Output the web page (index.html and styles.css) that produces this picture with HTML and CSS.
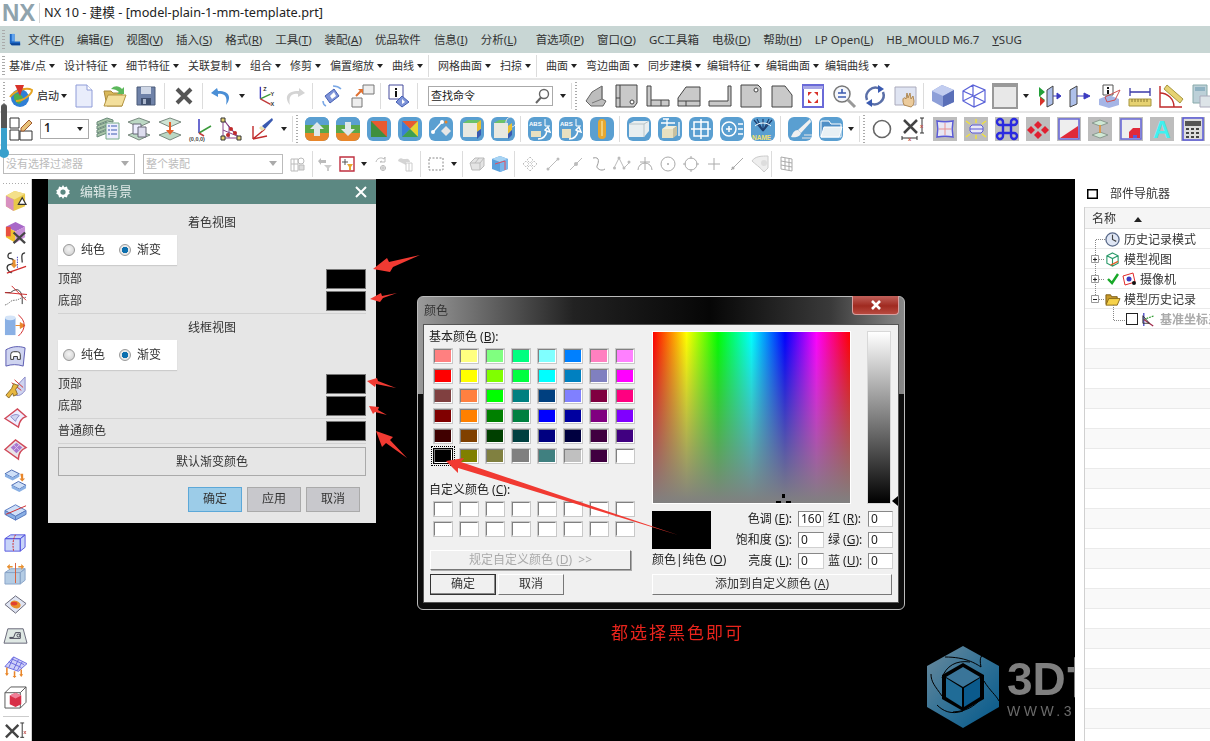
FILE: index.html
```html
<!DOCTYPE html>
<html lang="zh">
<head>
<meta charset="utf-8">
<title>NX 10 - 建模</title>
<link rel="stylesheet" href="styles.css">
</head>
<body>
<div class="app">
  <header class="titlebar">
    <span class="nxlogo">NX</span>
    <span class="titlediv"></span>
    <span class="titletext">NX 10 - 建模 - [model-plain-1-mm-template.prt]</span>
  </header>

  <nav class="menubar">
    <i class="grip"></i>
    <svg class="menuicon" viewBox="0 0 16 16"><path d="M3 2h5v8h6v4H5l-2-2z" fill="#1c66c4"/><path d="M5 2h3v8h-3z" fill="#5ea2ee"/><path d="M3 12l2 2h9v-2z" fill="#0d4596"/></svg>
    <span class="m">文件(<u>F</u>)</span><span class="m">编辑(<u>E</u>)</span><span class="m">视图(<u>V</u>)</span><span class="m">插入(<u>S</u>)</span><span class="m">格式(<u>R</u>)</span><span class="m">工具(<u>T</u>)</span><span class="m">装配(<u>A</u>)</span><span class="m">优品软件</span><span class="m">信息(<u>I</u>)</span><span class="m m-wide">分析(<u>L</u>)</span><span class="m">首选项(<u>P</u>)</span><span class="m">窗口(<u>O</u>)</span><span class="m">GC工具箱</span><span class="m">电极(<u>D</u>)</span><span class="m">帮助(<u>H</u>)</span><span class="m">LP Open(<u>L</u>)</span><span class="m">HB_MOULD M6.7</span><span class="m"><u>Y</u>SUG</span>
  </nav>

  <div class="tb tb-text">
    <i class="grip"></i>
    <span class="ti">基准/点</span><span class="ti">设计特征</span><span class="ti">细节特征</span><span class="ti">关联复制</span><span class="ti">组合</span><span class="ti">修剪</span><span class="ti">偏置缩放</span><span class="ti">曲线</span>
    <i class="sep sep-t"></i>
    <span class="ti">网格曲面</span><span class="ti">扫掠</span>
    <i class="sep sep-t"></i>
    <span class="ti">曲面</span><span class="ti">弯边曲面</span><span class="ti ti-tight">同步建模</span><span class="ti ti-tight">编辑特征</span><span class="ti ti-tight">编辑曲面</span><span class="ti ti-tight">编辑曲线</span><i class="caret"></i>
  </div>

  <div class="tb">
    <i class="grip g8"></i>
    <span class="c c26"><svg class="s24" viewBox="0 0 24 24"><circle cx="11" cy="14" r="9" fill="#2f7fd6"/><path d="M5 11c3-3 6-1 8 1s0 6-3 8c-3-1-6-5-5-9z" fill="#4fae4a"/><path d="M1 13C6 6 18 3 23 6c0 4-8 11-16 11" fill="none" stroke="#e6a421" stroke-width="2"/><path d="M6 1h9l-4 11z" fill="#d8322a"/></svg></span>
    <span class="tlabel">启动</span><span class="c c9"><i class="caret"></i></span>
    <span class="c c31"><svg class="s24" viewBox="0 0 24 24"><path d="M4 1h11l5 5v17H4z" fill="#e9edfb" stroke="#8f9cd8"/><path d="M15 1v5h5" fill="#fff" stroke="#8f9cd8"/></svg></span>
    <span class="c c31"><svg class="s24" viewBox="0 0 24 24"><path d="M1 7h7l2 2h9v13H4z" fill="#d9b85a" stroke="#a8883a"/><path d="M1 22l4-11h18l-4 11z" fill="#f3df9c" stroke="#b39442"/><path d="M8 5c4-4 8-3 11 0l2-2v7h-7l2-2c-2-2-5-3-8-3z" fill="#5cb85c"/></svg></span>
    <span class="c c31"><svg class="s24" viewBox="0 0 24 24"><path d="M3 3h18v18H3z" fill="#6f82a8" stroke="#4b5a78"/><path d="M7 3h10v7H7z" fill="#cfd7e6"/><path d="M7 14h10v7H7z" fill="#3f4f6e"/><path d="M9 15h3v5H9z" fill="#aab6cc"/></svg></span>
    <i class="sep s3"></i>
    <span class="c c31"><svg class="s24" viewBox="0 0 24 24"><path d="M5 5l14 14M19 5L5 19" stroke="#555" stroke-width="4"/></svg></span>
    <i class="sep s3"></i>
    <span class="c c29"><svg class="s24" viewBox="0 0 24 24"><path d="M8 4L2 9l7 4V10c6-1 10 2 8 11 5-6 5-14-8-14z" fill="#4b8fd6"/></svg></span><span class="c c14"><i class="caret"></i></span>
    <span class="c c31"><svg class="s24" viewBox="0 0 26 24"><path d="M8 15V2" stroke="#3a3ac0" stroke-width="1.5"/><path d="M8 15l11-5" stroke="#3a9a3a" stroke-width="1.5"/><path d="M8 15l11 6" stroke="#c03a3a" stroke-width="1.5"/><text x="11" y="7" class="axl">Z</text><text x="19" y="12" class="axl">Y</text><text x="19" y="23" class="axl">X</text></svg></span>
    <span class="c c29"><svg class="s24" viewBox="0 0 24 24"><path d="M16 4l6 5-7 4V10c-6-1-10 2-8 11-5-6-5-14 9-14z" fill="#d4d4d4"/></svg></span>
    <i class="sep s3"></i>
    <span class="c c31"><svg class="s24" viewBox="0 0 24 24"><path d="M5 12l9-7 5 7-9 7z" fill="#7d93d8" stroke="#4660b4"/><path d="M10 12l4-4 2 4-4 3z" fill="#fff"/><path d="M13 2c3 0 6 1 8 3M3 17c0 2 1 4 3 5" fill="none" stroke="#7aa8e6" stroke-width="1.5"/></svg></span>
    <span class="c c31"><svg class="s24" viewBox="0 0 24 24"><path d="M12 1h11v9H12zM1 14h10v9H1z" fill="#eee" stroke="#777"/><path d="M5 12l5-5" stroke="#e07030" stroke-width="2"/><path d="M7 5h5v5z" fill="#e07030"/></svg></span>
    <i class="sep s2"></i>
    <span class="c c31"><svg class="s24" viewBox="0 0 24 24"><path d="M2 1h14v14H2z" fill="#fff" stroke="#444a9c"/><path d="M8 4h2v2H8zM8 7h2v6H8z" fill="#111"/><path d="M15 12l7 6-7 5-6-5z" fill="#7d93d8" stroke="#4660b4"/><path d="M15 15l3 3-3 2z" fill="#fff"/></svg></span>
    <i class="sep s3"></i>
    <span class="search"><span class="searchtext">查找命令</span><svg class="s16" viewBox="0 0 16 16"><circle cx="10" cy="6" r="4.5" fill="#fff" stroke="#666" stroke-width="1.4"/><path d="M7 9.5L2 15" stroke="#666" stroke-width="2"/></svg></span>
    <span class="c c14 caretcell"><i class="caret"></i></span>
    <i class="sep s1"></i>
    <i class="grip g8"></i>
    <span class="c c31"><svg class="s24" viewBox="0 0 24 24"><path d="M2 17L8 8l10-6v13l4 2-3 5H7z" fill="#bdbdbd" stroke="#666"/><path d="M18 2v13L8 19" fill="none" stroke="#777"/></svg></span>
    <span class="c c31"><svg class="s24" viewBox="0 0 24 24"><path d="M1 1h21v18l-3 4H1z" fill="#c9c9c9" stroke="#444"/><path d="M5 1v22M1 14h4" stroke="#444"/><circle cx="17" cy="18" r="2" fill="#fff" stroke="#444"/></svg></span>
    <span class="c c31"><svg class="s24" viewBox="0 0 24 24"><path d="M1 2h4v14h18v6H1z" fill="#c9c9c9" stroke="#444"/><path d="M5 16v6M15 16v6" stroke="#444"/></svg></span>
    <span class="c c31"><svg class="s24" viewBox="0 0 24 24"><path d="M1 14l8-11h14v19H1z" fill="#c9c9c9" stroke="#444"/><path d="M1 17h22M9 17v5" stroke="#444"/></svg></span>
    <span class="c c31"><svg class="s24" viewBox="0 0 24 24"><path d="M20 2h3v20H1v-5h19z" fill="#c9c9c9" stroke="#444"/></svg></span>
    <span class="c c31"><svg class="s24" viewBox="0 0 24 24"><path d="M2 1h17l3 3v19H2z" fill="#c9c9c9" stroke="#444"/><circle cx="17" cy="6" r="2" fill="#fff" stroke="#444"/></svg></span>
    <span class="c c31"><svg class="s24" viewBox="0 0 24 24"><path d="M2 2h13l7 9v12H2z" fill="#c9c9c9" stroke="#444"/></svg></span>
    <span class="c c31"><svg class="s24" viewBox="0 0 24 24"><path d="M2 1h20v22H2z" fill="#fff" stroke="#6a6ad8" stroke-width="2"/><path d="M2 2h20v3H2z" fill="#a8a8e6"/><path d="M7 8h4L7 12zM17 19h-4l4-4zM17 8v4l-4-4zM7 19v-4l4 4z" fill="#d8322a"/></svg></span>
    <span class="c c31"><svg class="s24" viewBox="0 0 24 24"><circle cx="10" cy="10" r="8" fill="#f4f6fb" stroke="#777" stroke-width="1.5"/><path d="M6 9h8M10 5v4M6 13h8" stroke="#3a5ab0" stroke-width="1.6"/><path d="M16 16l7 7" stroke="#999" stroke-width="3"/></svg></span>
    <span class="c c31"><svg class="s24" viewBox="0 0 24 24"><path d="M4 16A9 9 0 0 1 17 5" fill="none" stroke="#5a6fa8" stroke-width="2.5"/><path d="M20 8A9 9 0 0 1 7 19" fill="none" stroke="#5a6fa8" stroke-width="2.5"/><path d="M15 1l6 4-6 4zM9 15l-6 4 6 4z" fill="#3a5ab0"/></svg></span>
    <span class="c c31"><svg class="s24" viewBox="0 0 24 24"><path d="M1 3h21v18H1z" fill="#dfe4f2" stroke="#aab"/><path d="M10 21c-2-5-1-8 1-7l1 1 1-6 1 5 2-5 1 6 2-3 1 5c0 3-1 5-3 6z" fill="#eccb9c" stroke="#b08a56"/></svg></span>
    <i class="sep s2m3"></i>
    <span class="c c31"><svg class="s24" viewBox="0 0 24 24"><path d="M1 7l10-6 12 5v12l-11 5-11-6z" fill="#8d9fd8"/><path d="M1 7l11 5 11-6-12-5z" fill="#c2cdf0"/><path d="M12 12v11l11-5V6z" fill="#5a6fb8"/></svg></span>
    <span class="c c31"><svg class="s24" viewBox="0 0 24 24"><path d="M1 7l10-6 12 5v12l-11 5-11-6zM1 7l11 5 11-6M12 12v11M11 1v11l-10 5M11 12l12 6" fill="none" stroke="#5a62d8" stroke-width="1.2"/></svg></span>
    <span class="c c31"><svg class="s24" viewBox="0 0 24 24"><path d="M0 0h24v24H0z" fill="#e8e8e8" stroke="#999" stroke-width="2"/><path d="M0 0h24v3H0z" fill="#999"/></svg></span>
    <span class="c c12"><i class="caret"></i></span>
    <span class="c c31 ml2"><svg class="s24" viewBox="0 0 24 24"><path d="M9 6l6-4v18l-6 3z" fill="#aec0ea" stroke="#444"/><path d="M1 3l6 5-6 5zM2 12l5 4-5 5z" fill="#23a03a"/><path d="M2 13l5 4-5 5z" fill="#d8322a"/><path d="M15 12h6M23 12l-4-3v6z" fill="#3a3ac0" stroke="#3a3ac0"/></svg></span>
    <span class="c c28"><svg class="s24" viewBox="0 0 24 24"><path d="M3 6l7-4v18l-7 3z" fill="#aec0ea" stroke="#444"/><path d="M10 12h8M23 12l-6-3v6z" fill="#3a3ac0" stroke="#3a3ac0"/></svg></span>
    <span class="c c31"><svg class="s24" viewBox="0 0 24 24"><path d="M2 15l10-4 10 4v6l-10 3-10-3z" fill="#a5b5e6"/><path d="M6 1h10v10H6z" fill="#fff" stroke="#555"/><path d="M10 3h2v2h-2zM10 6h2v4h-2z" fill="#111"/><path d="M8 13l15-7-5 10-8 2z" fill="none" stroke="#d05050"/></svg></span>
    <span class="c c31"><svg class="s24" viewBox="0 0 24 24"><path d="M2 8h20M2 4v8M22 4v8" stroke="#3a3aa8" stroke-width="1.3"/><path d="M1 15h22v7H1z" fill="#e6d272" stroke="#a6963e"/><path d="M4 15v3M7 15v3M10 15v3M13 15v3M16 15v3M19 15v3" stroke="#8a7a30"/></svg></span>
    <span class="c c31"><svg class="s24" viewBox="0 0 24 24"><path d="M1 2v21h22" fill="none" stroke="#c02a2a" stroke-width="1.4"/><path d="M1 9a14 14 0 0 1 14 14" fill="none" stroke="#c02a2a" stroke-width="1.4"/><path d="M8 1l16 14-3 4L5 5z" fill="#e6d272" stroke="#a6963e"/></svg></span>
    <span class="c c31"><svg class="s24" viewBox="0 0 24 24"><path d="M3 1h14v18H3z" fill="#bcd0d8" stroke="#8aa"/><path d="M5 3h10v4H5z" fill="#8fb2c2"/><path d="M10 12h14v11H10z" fill="#dde4e8" stroke="#aab"/></svg></span>
  </div>

  <div class="tb">
    <i class="slotg"></i>
    <span class="c c26"><svg class="s24" viewBox="0 0 24 24"><path d="M1 1h9v10H1zM1 13h9v10H1zM11 14h12v9H11z" fill="#fff" stroke="#333"/><path d="M12 11l8-8 3 3-8 8h-3z" fill="#e8c27a" stroke="#a05a30"/></svg></span>
    <span class="layersel"><b>1</b><i class="caret"></i></span>
    <span class="c c31"><svg class="s24" viewBox="0 0 24 24"><path d="M1 5l10-4 6 2v2l-6-1-10 4zM1 9l10-4v3L1 12zM1 13l10-4v3L1 16zM1 17l10-4v3L1 20z" fill="#a8c4a8" stroke="#6a8a7a"/><path d="M10 6h13v16H10z" fill="#eef" stroke="#7a8"/><path d="M12 9h2M12 13h2M12 17h2M15 9h6M15 13h6M15 17h6" stroke="#3a5ab0"/></svg></span>
    <span class="c c31"><svg class="s24" viewBox="0 0 24 24"><path d="M1 5l11-4 11 4-11 5z" fill="#bcd8c4" stroke="#7a8a80"/><path d="M1 18l11-4 11 4-11 5z" fill="#bcd8c4" stroke="#7a8a80"/><path d="M6 7h8v10H6z" fill="#eef" stroke="#667"/><path d="M11 10h8v10h-8z" fill="#dde" stroke="#667"/></svg></span>
    <span class="c c31"><svg class="s24" viewBox="0 0 24 24"><path d="M1 5l11-4 11 4-11 5z" fill="#cfe4d4" stroke="#7a8a80"/><path d="M1 18l11-4 11 4-11 5z" fill="#bcd8c4" stroke="#7a8a80"/><path d="M11 5h2v8h3l-4 5-4-5h3z" fill="#e8602a"/></svg></span>
    <span class="c c31"><svg class="s24" viewBox="0 0 24 24"><path d="M10 16V2" stroke="#3a3ac0" stroke-width="1.5"/><path d="M10 16l12-7" stroke="#3a9a3a" stroke-width="1.5"/><path d="M10 16l5 3" stroke="#c03a3a" stroke-width="1.5"/><text x="0" y="24" class="xyz">(0,0,0)</text></svg></span>
    <span class="c c29"><svg class="s24" viewBox="0 0 24 24"><path d="M4 2l6 8 10 11H4zM10 10v11M4 13l14 6M4 2l16 19" fill="none" stroke="#884488" stroke-width="1"/><circle cx="12" cy="12" r="2" fill="#c02a2a"/><circle cx="16" cy="16" r="2" fill="#c02a2a"/><circle cx="9" cy="18" r="2" fill="#c02a2a"/><path d="M2 1h4v4H2zM18 19h4v4h-4zM2 19h4v4H2z" fill="#e6d272" stroke="#333"/></svg></span>
    <span class="c c33"><svg class="s24" viewBox="0 0 24 24"><path d="M3 22V9M3 22l14-3M3 22l12-10" stroke="#c02a2a" stroke-width="1.4"/><path d="M12 9L22 1l1 2-8 9z" fill="#3a5ab0"/><path d="M11 9l4 3-3 2-3-3z" fill="#e8e0b0"/></svg></span>
    <span class="c c12"><i class="caret"></i></span>
    <i class="sep s2m0"></i>
    <i class="grip g8"></i>
    <span class="c c31"><span class="bb bb-updown"><svg class="s24" viewBox="0 0 24 24"><path d="M0 16h24v8H0z" fill="#e8862a"/><path d="M0 8h24v8H0z" fill="#5aa84a"/><path d="M0 0h24v8H0z" fill="#5a9fd1"/><path d="M12 5l7 7h-4v7H9v-7H5z" fill="#dfe8ea"/></svg></span></span>
    <span class="c c31"><span class="bb"><svg class="s24" viewBox="0 0 24 24"><path d="M0 16h24v8H0z" fill="#e8862a"/><path d="M0 8h24v8H0z" fill="#5aa84a"/><path d="M0 0h24v8H0z" fill="#5a9fd1"/><path d="M12 19l7-7h-4V5H9v7H5z" fill="#dfe8ea"/></svg></span></span>
    <span class="c c31"><span class="bb"><svg class="s24" viewBox="0 0 24 24"><path d="M4 4h16v16H4z" fill="#3f8f3f"/><path d="M4 4h16L4 20z" fill="#3f8f3f"/><path d="M4 4h16v16z" fill="#e85a30"/></svg></span></span>
    <span class="c c31"><span class="bb"><svg class="s24" viewBox="0 0 24 24"><path d="M4 4h16L12 12z" fill="#e85a30"/><path d="M4 4v16l8-8z" fill="#3a7fd8"/><path d="M20 4v16l-8-8z" fill="#e8d430"/><path d="M4 20h16l-8-8z" fill="#3fa04f"/></svg></span></span>
    <span class="c c31"><span class="bb"><svg class="s24" viewBox="0 0 24 24"><path d="M4 15l8-9" stroke="#fff" stroke-width="1.5"/><circle cx="4" cy="15" r="2" fill="#fff"/><circle cx="13" cy="5" r="2" fill="#fff"/><path d="M12 14l5-5 5 5-5 5z" fill="#e6e6e6"/><circle cx="17" cy="5" r="1.5" fill="#e8862a"/></svg></span></span>
    <span class="c c31"><span class="bb"><svg class="s24" viewBox="0 0 24 24"><path d="M3 6h14v14H3z" fill="#e8e8e0"/><path d="M3 6l5-3h13l-4 3z" fill="#6ac26a"/><path d="M17 6l4-3v9l-4 3z" fill="#e8c030"/><path d="M17 15l4-3v6l-4 4z" fill="#3a5ab0"/></svg></span></span>
    <span class="c c31"><span class="bb"><svg class="s24" viewBox="0 0 24 24"><path d="M3 6h14v15H3z" fill="#e8e8e0"/><path d="M3 6l5-3h8l-3 3z" fill="#6ac26a"/><path d="M17 9l4-3v7l-4 4z" fill="#e8c030"/><path d="M17 17l4-4v5l-4 4z" fill="#3a5ab0"/><path d="M15 6a5 5 0 1 1 6 4" fill="none" stroke="#e6e6e6"/></svg></span></span>
    <i class="sep s2m3"></i>
    <span class="c c31"><span class="bb"><svg class="s24" viewBox="0 0 24 24"><text x="1" y="9" class="abs">ABS</text><path d="M17 2v7h5" stroke="#fff" fill="none"/><path d="M3 14h10v6H3z" fill="#e8e0c0"/><path d="M10 22c5 0 8-3 9-8l3 1-2-5-3 3 1 1" fill="none" stroke="#fff" stroke-width="1.5"/></svg></span></span>
    <span class="c c31"><span class="bb"><svg class="s24" viewBox="0 0 24 24"><text x="1" y="9" class="abs">ABS</text><path d="M17 2v7h5" stroke="#fff" fill="none"/><path d="M3 12h9v9H3z" fill="#e8e0c0"/><path d="M10 22c5 0 8-3 9-8l3 1-2-5-3 3 1 1" fill="none" stroke="#fff" stroke-width="1.5"/></svg></span></span>
    <span class="c c31"><span class="bb"><svg class="s24" viewBox="0 0 24 24"><rect x="8" y="2" width="8" height="20" rx="4" fill="#e8a830"/><path d="M12 4v15" stroke="#f6dc90" stroke-width="1.5"/></svg></span></span>
    <i class="sep s2m3"></i>
    <span class="c c31"><span class="bb"><svg class="s24" viewBox="0 0 24 24"><path d="M2 7l5-3h15v10l-5 6H2z" fill="#e8eef0"/><path d="M2 7h15v13M17 7l5-3" fill="none" stroke="#b8c4c8"/></svg></span></span>
    <span class="c c31"><span class="bb"><svg class="s24" viewBox="0 0 24 24"><path d="M4 12h11v9H4z" fill="#e8e0c0"/><path d="M4 12l4-3h11l-4 3z" fill="#f4eed8"/><path d="M15 12l4-3v9l-4 3z" fill="#c8c0a0"/><path d="M3 6h14M9 2v7M21 5v14M5 2l6 0" stroke="#fff" stroke-width="1.3"/></svg></span></span>
    <span class="c c31"><span class="bb"><svg class="s24" viewBox="0 0 24 24"><path d="M5 5h14v14H5zM12 2v20M2 12h20" fill="none" stroke="#fff" stroke-width="1.5"/></svg></span></span>
    <span class="c c31"><span class="bb"><svg class="s24" viewBox="0 0 24 24"><circle cx="9" cy="12" r="7" fill="none" stroke="#fff" stroke-width="1.5"/><path d="M6 12h6M9 9v6M18 7h5M18 12h5M18 17h5" stroke="#fff" stroke-width="1.5"/></svg></span></span>
    <span class="c c31"><span class="bb"><svg class="s24" viewBox="0 0 24 24"><path d="M12 14L3 3M12 14l9-11M12 14V2M12 14L6 2M12 14l6-12" stroke="#1f3f70" stroke-width="1.2"/><path d="M4 9c4-4 12-4 16 0" stroke="#fff" fill="none"/><text x="1" y="23" class="nm">NAME</text></svg></span></span>
    <i class="sep s2m3"></i>
    <span class="c c31"><span class="bb"><svg class="s24" viewBox="0 0 24 24"><path d="M22 2L10 13l3 3L23 5z" fill="#f0f0f0"/><path d="M10 13c-4 0-5 3-7 7 4 1 9 0 10-4z" fill="#f0f0f0"/><path d="M16 18h8M14 21h10" stroke="#e8e8e8" stroke-width="1.2"/></svg></span></span>
    <span class="c c31"><span class="bb"><svg class="s24" viewBox="0 0 24 24"><path d="M2 4h8l2 3h10v13H2z" fill="#4f8fc6" stroke="#fff"/><path d="M2 20l3-10h18l-3 10z" fill="#e8f0f4" stroke="#fff"/></svg></span></span>
    <span class="c c10"><i class="caret"></i></span>
    <i class="sep s3m0"></i>
    <i class="grip g8"></i>
    <span class="c c28"><svg class="s20" viewBox="0 0 20 20"><circle cx="10" cy="10" r="8.5" fill="none" stroke="#666" stroke-width="1.6"/></svg></span>
    <span class="c c33"><svg class="s24" viewBox="0 0 24 24"><path d="M3 3l13 13M16 3L3 16" stroke="#444" stroke-width="2.5"/><path d="M19 1h4M21 1v15M19 16h4M1 19v4M16 19v4M1 21h15" stroke="#333"/><text x="19" y="11" class="rx">x</text><text x="7" y="24" class="rx">x</text></svg></span>
    <span class="c c31"><span class="gs"><svg class="s24" viewBox="0 0 24 24"><path d="M4 4c5 1 11 1 16 0-1 5-1 11 0 16-5-1-11-1-16 0 1-5 1-11 0-16z" fill="#e8e8f4" stroke="#5a5ad8" stroke-width="1.4"/><path d="M12 6v12M6 12h12" stroke="#e89090"/></svg></span></span>
    <span class="c c31"><span class="gs"><svg class="s24" viewBox="0 0 24 24"><path d="M6 10l2-2h9l2 2v4l-2 2H8l-2-2zM6 12h13" fill="#e8e8f4" stroke="#5a5ad8"/><path d="M12 2v4M12 18v4M2 4l4 3M22 4l-4 3M2 20l4-3M22 20l-4-3" stroke="#f0e040" stroke-width="1.5"/></svg></span></span>
    <span class="c c31"><span class="gs"><svg class="s24" viewBox="0 0 24 24"><path d="M8 8h8v8H8zM8 8H5a3 3 0 1 1 3-3zM16 8V5a3 3 0 1 1 3 3zM16 16h3a3 3 0 1 1-3 3zM8 16v3a3 3 0 1 1-3-3z" fill="none" stroke="#2a2ae0" stroke-width="2.4"/></svg></span></span>
    <span class="c c31"><span class="gs"><svg class="s24" viewBox="0 0 24 24"><path d="M12 4l4 4-4 4-4-4zM5 9l4 4-4 4-4-4zM19 9l4 4-4 4-4-4zM12 14l4 4-4 4-4-4z" fill="#e02030"/></svg></span></span>
    <span class="c c31"><span class="gs"><svg class="s24" viewBox="0 0 24 24"><path d="M2 2h20v20H2z" fill="#eeeeee" stroke="#6a6ad8" stroke-width="1.6"/><path d="M3 21L21 9v12z" fill="#e02a3a"/></svg></span></span>
    <span class="c c31"><span class="gs"><svg class="s24" viewBox="0 0 24 24"><path d="M4 6l8-3 8 3-8 3zM4 18l8-3 8 3-8 3z" fill="#cfe8d4" stroke="#8a9a90"/><path d="M12 8v8" stroke="#e89030" stroke-width="1.5"/></svg></span></span>
    <span class="c c31"><span class="gs"><svg class="s24" viewBox="0 0 24 24"><path d="M2 2h20v20H2z" fill="#eeeeee" stroke="#6a6ad8" stroke-width="1.6"/><path d="M10 21v-6l4-4h7v10z" fill="#e02a3a"/><path d="M14 18h4v3h-4z" fill="#5a5ad8"/></svg></span></span>
    <span class="c c31"><span class="gs"><svg class="s24" viewBox="0 0 24 24"><text x="12" y="21" class="bigA">A</text></svg></span></span>
    <span class="c c31"><span class="gs"><svg class="s24" viewBox="0 0 24 24"><path d="M2 1h20v22H2z" fill="#ddd" stroke="#5a5ad8" stroke-width="1.5"/><path d="M4 4h16v5H4z" fill="#555"/><path d="M5 11h3v2H5zM10 11h3v2h-3zM15 11h3v2h-3zM5 15h3v2H5zM10 15h3v2h-3zM15 15h3v2h-3zM5 19h3v2H5zM10 19h3v2h-3zM15 19h3v2h-3z" fill="#444"/></svg></span></span>
  </div>

  <div class="tb tb-last">
    <span class="filter f1">没有选择过滤器<i class="caret caret-light"></i></span>
    <span class="filter f2">整个装配<i class="caret caret-light"></i></span>
    <span class="c c29"><svg class="s16" viewBox="0 0 16 16"><path d="M1 3h7v12H1zM4 3v12M1 8h7" fill="none" stroke="#bbb"/><circle cx="11" cy="5" r="3" fill="none" stroke="#bbb"/><path d="M9 9h5v5H9z" fill="#ddd" stroke="#bbb"/></svg></span>
    <i class="sep"></i>
    <span class="c c24"><svg class="s16" viewBox="0 0 16 16"><path d="M1 5l3-3v2h5v3H4v2z" fill="#bbb"/><path d="M7 9h8l-3 3v3h-2v-3z" fill="#ccc"/></svg></span>
    <span class="c c20"><svg class="s16" viewBox="0 0 16 16"><path d="M1 1h14v14H1z" fill="#fff" stroke="#c03040" stroke-width="1.4"/><path d="M6 3v6M3 6h6" stroke="#555"/><path d="M8 8h6l-2 3v3h-2v-3z" fill="#e8a830"/></svg></span>
    <span class="c c14"><i class="caret"></i></span>
    <span class="c c21"><svg class="s16" viewBox="0 0 16 16"><path d="M9 9v6M6 12h6" stroke="#bbb"/><circle cx="9" cy="12" r="2.5" fill="none" stroke="#bbb"/><path d="M2 6a5 5 0 0 1 8-3l1-2v5H6l2-1" fill="none" stroke="#bbb"/></svg></span>
    <span class="c c25"><svg class="s16" viewBox="0 0 16 16"><path d="M1 5a3 3 0 0 1 5-2h3a3 3 0 0 1 4 3H9v3" fill="#d4d4d4"/><path d="M9 7h6v8H9zM12 7v8" fill="none" stroke="#ccc"/></svg></span>
    <i class="sep s3"></i>
    <span class="c c24"><svg class="s16" viewBox="0 0 16 16"><path d="M1 2h14v12H1z" fill="none" stroke="#888" stroke-dasharray="2 1.5"/></svg></span>
    <span class="c c12"><i class="caret"></i></span>
    <i class="sep s2m0"></i>
    <span class="c c28"><svg class="s16" viewBox="0 0 16 16"><path d="M1 7l5-5h9v8l-4 4H3z" fill="#e4e4e4" stroke="#bbb"/><path d="M1 7h10v7M11 7l4-5M6 7l4-5" fill="none" stroke="#bbb"/></svg></span>
    <span class="c c18"><svg class="s18" viewBox="0 0 18 18"><path d="M1 4l8-3 8 3v10l-8 3-8-3z" fill="#5aa0dc"/><path d="M1 4l8 3 8-3-8-3z" fill="#a8d4f4"/><path d="M9 7v10l8-3V4z" fill="#7ab4ea"/><path d="M4 9l10-3v9" fill="none" stroke="#e05060"/></svg></span>
    <i class="sep s5"></i>
    <span class="c c23 ml4"><svg class="s16" viewBox="0 0 16 16"><path d="M8 1l3 3-3 3-3-3zM1 8l3-3 3 3-3 3zM15 8l-3-3-3 3 3 3zM8 15l3-3-3-3-3 3z" fill="none" stroke="#bbb" stroke-dasharray="1.5 1"/></svg></span>
    <span class="c c23"><svg class="s16" viewBox="0 0 16 16"><path d="M2 14L14 2" stroke="#bbb"/><circle cx="13" cy="3" r="1.5" fill="#bbb"/><circle cx="3" cy="13" r="1.5" fill="#bbb"/></svg></span>
    <span class="c c23"><svg class="s16" viewBox="0 0 16 16"><path d="M2 14L14 2" stroke="#bbb"/><circle cx="8" cy="8" r="2" fill="#bbb"/></svg></span>
    <span class="c c23"><svg class="s16" viewBox="0 0 16 16"><path d="M2 2c8-2 5 6 4 8s4 6 8 3" fill="none" stroke="#999"/></svg></span>
    <span class="c c23"><svg class="s18" viewBox="0 0 18 18"><path d="M1 13L6 3l5 10 6-6" fill="none" stroke="#bbb"/><circle cx="6" cy="3" r="1.5" fill="#bbb"/><circle cx="1.5" cy="13" r="1.5" fill="#bbb"/><circle cx="11" cy="13" r="1.5" fill="#bbb"/><circle cx="16" cy="7" r="1.5" fill="#bbb"/></svg></span>
    <span class="c c23"><svg class="s16" viewBox="0 0 16 16"><path d="M1 14a7 7 0 0 1 14 0M8 1v13M3 6h10" fill="none" stroke="#aaa"/></svg></span>
    <span class="c c23"><svg class="s16" viewBox="0 0 16 16"><circle cx="8" cy="8" r="7" fill="none" stroke="#aaa"/><circle cx="8" cy="8" r="1" fill="#aaa"/></svg></span>
    <span class="c c23"><svg class="s16" viewBox="0 0 16 16"><circle cx="8" cy="8" r="6" fill="none" stroke="#aaa"/><path d="M8 0v3M8 13v3M0 8h3M13 8h3" stroke="#aaa"/></svg></span>
    <span class="c c23"><svg class="s16" viewBox="0 0 16 16"><path d="M8 2v12M2 8h12" stroke="#aaa"/></svg></span>
    <span class="c c23"><svg class="s16" viewBox="0 0 16 16"><path d="M2 14L14 2" stroke="#aaa"/><circle cx="4" cy="12" r="1.5" fill="#aaa"/></svg></span>
    <span class="c c23"><svg class="s18" viewBox="0 0 18 18"><path d="M1 6c3-5 10-5 16-5v12l-4 4c-4-5-9-8-12-11z" fill="#eee" stroke="#ccc"/><circle cx="13" cy="8" r="3" fill="#ddd"/></svg></span>
    <i class="sep"></i>
    <span class="c c30"><svg class="s16" viewBox="0 0 16 16"><path d="M2 1l11 2v12L2 13zM6 2v12M10 3v12M2 5l11 2M2 9l11 2" fill="none" stroke="#aaa"/></svg></span>
  </div>

  <main class="main">
    <aside class="leftbar">
      <i class="hgrip"></i>
      <span class="lc"><svg class="s24" viewBox="0 0 24 24"><path d="M2 6l9-5 11 3v13l-12 5-8-5z" fill="#e8c84a"/><path d="M2 6l9 4 11-6-11-3z" fill="#f4e08a"/><path d="M2 6v11l8 5V10z" fill="#d890c0"/><path d="M15 15l4-7 4 7z" fill="#fff" stroke="#333" stroke-width="1.2"/></svg></span>
      <span class="lc"><svg class="s24" viewBox="0 0 24 24"><path d="M2 6l10-5 10 5-10 5z" fill="#a868c8"/><path d="M2 6v11l10 6V11z" fill="#f0c030"/><path d="M22 6v11l-10 6V11z" fill="#c890d8"/><path d="M2 6h5v10H2z" fill="#e85040"/><path d="M10 12l12 11M22 12L10 23" stroke="#444" stroke-width="2.4"/></svg></span>
      <span class="lc"><svg class="s24" viewBox="0 0 24 24"><path d="M8 1C3 1 3 7 7 7s4 6 0 6-5 4-2 7 3 1 3 1M22 1c-5 0-3 6-3 10" fill="none" stroke="#333" stroke-width="1.3"/><path d="M14 5v12" stroke="#3a3ac0" stroke-dasharray="1.5 1"/><path d="M3 22l20-7" stroke="#d02a2a" stroke-width="1.2"/><path d="M9 8h3v5h2l-3.500 4-3.500-4h2z" fill="#e89030"/></svg></span>
      <span class="lc"><svg class="s24" viewBox="0 0 24 24"><path d="M1 10h6c9-8 12 2 12 6v6" fill="none" stroke="#333"/><path d="M1 23c6-2 5-5 10-5s5-3 12-3" fill="none" stroke="#777" stroke-dasharray="1.500 1"/><path d="M1 10l23 2M8 3l15 15" stroke="#d02a2a"/></svg></span>
      <span class="lc"><svg class="s24" viewBox="0 0 24 24"><path d="M1 4h11v18H1z" fill="#8ab0e4"/><ellipse cx="6.500" cy="4" rx="5.500" ry="2.500" fill="#d4e4f8"/><path d="M12 12h6M22 12l-5-3v6z" fill="#e8862a" stroke="#e8862a"/><path d="M15 1c8 6 8 15 0 22" fill="none" stroke="#d02a2a"/></svg></span>
      <span class="lc"><svg class="s24" viewBox="0 0 24 24"><path d="M2 5c7-4 14-4 20-2l-2 19c-6-2-12-2-18 0z" fill="#cfd4f0" stroke="#5a5ab0"/><path d="M7 15v-5a3 3 0 0 1 3-3h4a3 3 0 0 1 3 3v5h-3v-3H10v3z" fill="#fff" stroke="#333"/></svg></span>
      <span class="lc"><svg class="s24" viewBox="0 0 24 24"><path d="M8 16L22 1v14c-4 6-10 8-14 1z" fill="#cfd4f0" stroke="#8a8ac8"/><path d="M8 7l10 8M11 4l9 8" stroke="#d02a2a"/><path d="M2 20l6-7 2-5 5 2-3 4 2 5-4 2-1-3-4 5z" fill="#e8b840" stroke="#8a6a2a"/></svg></span>
      <span class="lc"><svg class="s24" viewBox="0 0 24 24"><path d="M1 12L14 2l9 8c-4 1-7 5-8 11z" fill="#eef" stroke="#d04a5a" stroke-width="1.5"/><path d="M7 10c3-2 6-3 9-1-2 2-3 3-4 6z" fill="#cfd4f0" stroke="#8a8ac8"/></svg></span>
      <span class="lc"><svg class="s24" viewBox="0 0 24 24"><path d="M1 12L12 2l11 8c-5 2-8 5-8 12z" fill="#e8e4e8" stroke="#d04a5a" stroke-width="1.5"/><path d="M7 10l6-5 6 5-6 6z" fill="#a878d0"/><path d="M10 7l6 6M16 7l-6 6" stroke="#d8c0e8"/></svg></span>
      <span class="lc"><svg class="s24" viewBox="0 0 24 24"><path d="M1 5l7-4 8 4-7 4z" fill="#cfe0f8" stroke="#4a6ab0"/><path d="M1 5v3l8 4V9zM16 5v3l-7 4V9z" fill="#8ab0e4"/><path d="M8 17l7-4 8 4-7 4z" fill="#cfe0f8" stroke="#4a6ab0"/><path d="M8 17v3l8 4v-3zM23 17v3l-7 4v-3z" fill="#8ab0e4"/><path d="M17 5h3v5h2l-3 3-3-3h2z" fill="#e8862a"/></svg></span>
      <span class="lc"><svg class="s24" viewBox="0 0 24 24"><path d="M1 11l11-6 11 6-11 6z" fill="#cfe0f8" stroke="#5a7ac0"/><path d="M1 11v4l11 6v-4zM23 11v4l-11 6v-4z" fill="#8ab0e4" stroke="#5a7ac0"/><path d="M2 15L23 6" stroke="#d02a2a"/></svg></span>
      <span class="lc"><svg class="s24" viewBox="0 0 24 24"><path d="M1 8h16l5-4H7zM1 8v13h16V8zM17 8v13l5-4V4z" fill="#c8d4f8" stroke="#5a5ae0"/><path d="M12 4c-3 5-3 11-2 17" fill="none" stroke="#d02a2a" stroke-dasharray="2 1"/></svg></span>
      <span class="lc"><svg class="s24" viewBox="0 0 24 24"><path d="M1 11h16l5-4H7zM1 11v12h16V11zM17 11v12l5-4V7z" fill="#b4cce4" stroke="#8aa4c8"/><path d="M12 1v21" stroke="#d8603a"/><path d="M4 5h5M20 5h-5" stroke="#e89030" stroke-width="1.5"/><path d="M3 5l3-3v6zM21 5l-3-3v6z" fill="#e89030"/></svg></span>
      <span class="lc"><svg class="s24" viewBox="0 0 24 24"><path d="M1 12L12 3l11 8-11 10z" fill="#dfe4f2" stroke="#667"/><ellipse cx="12" cy="12" rx="5.500" ry="4" fill="#e8902a" transform="rotate(20 12 12)"/><ellipse cx="10.500" cy="11" rx="3.500" ry="2" fill="#e04030"/></svg></span>
      <span class="lc"><svg class="s24" viewBox="0 0 24 24"><path d="M4 5h16l4 15H0z" fill="#dfe8e4" stroke="#667"/><path d="M6 14h4l2-5h5v6H6z" fill="none" stroke="#445"/><circle cx="15" cy="12" r="1.500" fill="none" stroke="#445"/></svg></span>
      <span class="lc"><svg class="s24" viewBox="0 0 24 24"><path d="M1 12L10 2l14 7-9 8z" fill="#cfd0f8" stroke="#6a6ae0"/><path d="M5 7l13 6M8 4l13 6M10 2l-5 11M15 5l-5 10M19 7l-5 9" stroke="#6a6ae0" fill="none"/><path d="M3 13v7M11 17v6M18 15v6" stroke="#e8862a" stroke-width="1.6"/><path d="M1 19h4l-2 3zM9 22h4l-2 2zM16 20h4l-2 3z" fill="#e8862a"/></svg></span>
      <span class="lc"><svg class="s24" viewBox="0 0 24 24"><path d="M1 7l6-6h16v16l-6 6H1zM1 7h16v16M17 7l6-6" fill="none" stroke="#555"/><path d="M6 10l6-3 6 3v9l-6 3-6-3z" fill="#d83048"/><path d="M6 10l6 3 6-3-6-3z" fill="#f08098"/></svg></span>
      <i class="ldiv"></i>
      <span class="lc"><svg class="s24" viewBox="0 0 24 24"><path d="M2 3l13 13M15 3L2 16" stroke="#444" stroke-width="2.5"/><path d="M17 1h4M19 1v15M17 16h4" stroke="#333"/><text x="20" y="12" class="rx">x</text></svg></span>
    </aside>

    <div class="canvas"></div>

    <section class="nav">
      <div class="navhead"><i class="navbox"></i><span>部件导航器</span></div>
      <div class="tree">
        <div class="treehead"><span>名称</span><i class="uptri"></i></div>
        <div class="row r-a"><svg class="s15" viewBox="0 0 16 16"><circle cx="8" cy="8" r="7" fill="#dfe6f4" stroke="#5a6a8a" stroke-width="1.400"/><path d="M8 3v5l4 2" fill="none" stroke="#444" stroke-width="1.200"/></svg><span>历史记录模式</span></div>
        <div class="row r-a"><svg class="s15" viewBox="0 0 16 16"><path d="M8 1l6 3v8l-6 3-6-3V4zM2 4l6 3 6-3M8 7v8" fill="none" stroke="#2a9a6a" stroke-width="1.200"/><path d="M6 14l8-4" stroke="#e0602a" stroke-width="1.500"/></svg><span>模型视图</span></div>
        <div class="row r-c"><svg class="chk" viewBox="0 0 12 12"><path d="M1 6l4 4 6-9" fill="none" stroke="#18a828" stroke-width="2.400"/></svg><svg class="cam" viewBox="0 0 14 14"><path d="M1 4l10-3 2 9-10 3z" fill="#fff" stroke="#e02a2a"/><circle cx="7" cy="7" r="2.500" fill="#3a3ac0"/><circle cx="12" cy="11" r="2" fill="#111"/></svg><span>摄像机</span></div>
        <div class="row r-a"><svg class="s15" viewBox="0 0 16 16"><path d="M1 3h5l1 2h6v8H1z" fill="#c89a2a" stroke="#7a5a12"/><path d="M1 14l3-7h12l-3 7z" fill="#f6d24a" stroke="#8a6a1a"/></svg><span>模型历史记录</span></div>
        <div class="row r-e"><i class="cbx"></i><svg class="s15" viewBox="0 0 16 16"><path d="M3 15V1" stroke="#2a2ac0" stroke-width="1.200"/><path d="M3 8l11-4" stroke="#2a9a2a" stroke-dasharray="2 1" stroke-width="1.200"/><path d="M3 8l10 7" stroke="#a02a4a" stroke-width="1.400"/><path d="M2 4l7 8H2z" fill="none" stroke="#333"/></svg><span class="muted">基准坐标系</span></div>
        <div class="row"></div><div class="row alt"></div><div class="row"></div><div class="row alt"></div><div class="row"></div><div class="row alt"></div><div class="row"></div><div class="row alt"></div><div class="row"></div><div class="row alt"></div><div class="row"></div><div class="row alt"></div><div class="row"></div><div class="row alt"></div><div class="row"></div><div class="row alt"></div><div class="row"></div><div class="row alt"></div><div class="row"></div><div class="row alt"></div>
        <svg class="treelines" viewBox="1085 229 50 100"><path d="M1095.500 240v58M1096 239.500h9M1099 259.500h6M1099 279.500h6M1099 299.500h6M1113.500 305v15M1114 320.500h11" fill="none" stroke="#888" stroke-dasharray="1 1"/><path d="M1091.500 255.500h7v7h-7zM1091.500 275.500h7v7h-7zM1091.500 295.500h7v7h-7z" fill="#fff" stroke="#999"/><path d="M1093 259.500h4M1095 257.500v4M1093 279.500h4M1095 277.500v4M1093 299.500h4" stroke="#222"/></svg>
      </div>
    </section>

    <div class="dlg-bg">
      <div class="dlg-title"><svg class="s14" viewBox="0 0 16 16"><path d="M8 0l1.500 2.500 3-.8.800 3L16 6.500 14.500 8 16 9.500l-2.700 1.800-.8 3-3-.8L8 16l-1.500-2.500-3 .8-.8-3L0 9.500 1.500 8 0 6.500l2.700-1.800.8-3 3 .8z" fill="#fff"/><circle cx="8" cy="8" r="3" fill="#5c8882"/></svg><span>编辑背景</span><svg class="s14 dlg-x" viewBox="0 0 14 14"><path d="M2 2l10 10M12 2L2 12" stroke="#fff" stroke-width="2"/></svg></div>
      <div class="dlg-body">
        <div class="sect sect-first">着色视图</div>
        <div class="radios"><i class="radio"></i><span>纯色</span><i class="radio on"></i><span>渐变</span></div>
        <div class="crow crow-first"><span>顶部</span><i class="blk"></i></div>
        <div class="crow"><span>底部</span><i class="blk"></i></div>
        <hr class="hr">
        <div class="sect">线框视图</div>
        <div class="radios"><i class="radio"></i><span>纯色</span><i class="radio on"></i><span>渐变</span></div>
        <div class="crow crow-first"><span>顶部</span><i class="blk"></i></div>
        <div class="crow"><span>底部</span><i class="blk"></i></div>
        <hr class="hr">
        <div class="crow"><span>普通颜色</span><i class="blk"></i></div>
        <hr class="hr">
        <div class="defbtn">默认渐变颜色</div>
        <div class="btnrow"><span class="dbtn primary">确定</span><span class="dbtn">应用</span><span class="dbtn">取消</span></div>
      </div>
    </div>

    <div class="win">
      <div class="win-title"><span>颜色</span><span class="win-close"><svg class="s10" viewBox="0 0 12 10"><path d="M2 1l8 8M10 1L2 9" stroke="#fff" stroke-width="2.600"/></svg></span></div>
      <div class="client">
        <div class="cl-left">
          <div class="lab">基本颜色 (<u>B</u>):</div>
          <div class="swgrid">
            <i class="sw" style="background:#ff8080"></i><i class="sw" style="background:#ffff80"></i><i class="sw" style="background:#80ff80"></i><i class="sw" style="background:#00ff80"></i><i class="sw" style="background:#80ffff"></i><i class="sw" style="background:#0080ff"></i><i class="sw" style="background:#ff80c0"></i><i class="sw" style="background:#ff80ff"></i>
            <i class="sw" style="background:#ff0000"></i><i class="sw" style="background:#ffff00"></i><i class="sw" style="background:#80ff00"></i><i class="sw" style="background:#00ff40"></i><i class="sw" style="background:#00ffff"></i><i class="sw" style="background:#0080c0"></i><i class="sw" style="background:#8080c0"></i><i class="sw" style="background:#ff00ff"></i>
            <i class="sw" style="background:#804040"></i><i class="sw" style="background:#ff8040"></i><i class="sw" style="background:#00ff00"></i><i class="sw" style="background:#008080"></i><i class="sw" style="background:#004080"></i><i class="sw" style="background:#8080ff"></i><i class="sw" style="background:#800040"></i><i class="sw" style="background:#ff0080"></i>
            <i class="sw" style="background:#800000"></i><i class="sw" style="background:#ff8000"></i><i class="sw" style="background:#008000"></i><i class="sw" style="background:#008040"></i><i class="sw" style="background:#0000ff"></i><i class="sw" style="background:#0000a0"></i><i class="sw" style="background:#800080"></i><i class="sw" style="background:#8000ff"></i>
            <i class="sw" style="background:#400000"></i><i class="sw" style="background:#804000"></i><i class="sw" style="background:#004000"></i><i class="sw" style="background:#004040"></i><i class="sw" style="background:#000080"></i><i class="sw" style="background:#000040"></i><i class="sw" style="background:#400040"></i><i class="sw" style="background:#400080"></i>
            <i class="sw sel" style="background:#000000"></i><i class="sw" style="background:#808000"></i><i class="sw" style="background:#808040"></i><i class="sw" style="background:#808080"></i><i class="sw" style="background:#408080"></i><i class="sw" style="background:#c0c0c0"></i><i class="sw" style="background:#400040"></i><i class="sw" style="background:#ffffff"></i>
          </div>
          <div class="lab lab2">自定义颜色 (<u>C</u>):</div>
          <div class="swgrid">
            <i class="sw"></i><i class="sw"></i><i class="sw"></i><i class="sw"></i><i class="sw"></i><i class="sw"></i><i class="sw"></i><i class="sw"></i>
            <i class="sw"></i><i class="sw"></i><i class="sw"></i><i class="sw"></i><i class="sw"></i><i class="sw"></i><i class="sw"></i><i class="sw"></i>
          </div>
          <div class="wbtn wbtn-define">规定自定义颜色 (<u>D</u>) &nbsp;&gt;&gt;</div>
          <div class="wbtnrow"><span class="wbtn wbtn-ok">确定</span><span class="wbtn wbtn-c">取消</span></div>
        </div>
        <div class="cl-right">
          <div class="pick"><div class="spectrum"></div><div class="lum"></div><i class="lumarrow"></i><i class="cross"></i></div>
          <div class="lower">
            <div class="prev"><i class="prevbox"></i><span>颜色|纯色 (<u>O</u>)</span></div>
            <div class="fields">
              <label>色调 (<u>E</u>):</label><span class="inp">160</span><label class="l2">红 (<u>R</u>):</label><span class="inp">0</span>
              <label>饱和度 (<u>S</u>):</label><span class="inp">0</span><label class="l2">绿 (<u>G</u>):</label><span class="inp">0</span>
              <label>亮度 (<u>L</u>):</label><span class="inp">0</span><label class="l2">蓝 (<u>U</u>):</label><span class="inp">0</span>
            </div>
          </div>
          <div class="wbtn wbtn-add">添加到自定义颜色 (<u>A</u>)</div>
        </div>
      </div>
    </div>

    <div class="caption">都选择黑色即可</div>

    <svg class="arrows" viewBox="0 179 1210 562">
      <path fill="#f13a32" d="M373 269L387 258 389 262 420 255 393 267 390 272zM370 299L381 293 382 296 397 293 383 298 380 302zM367 381L377 378 378 381 396 388 376 384 375 387zM369 406L379 407 378 410 387 415 375 412 373 414zM376 431L393 437 390 440 407 458 386 443 382 447zM446 461L464 458 461 462 678 535 458 468 458 473z"/>
    </svg>

    <div class="wm">
      <svg class="wmlogo" viewBox="0 0 72 82"><defs><linearGradient id="wg" x1="0" y1="0" x2="1" y2="1"><stop offset="0" stop-color="#6b8a9c"/><stop offset=".55" stop-color="#2d6f95"/><stop offset="1" stop-color="#04588a"/></linearGradient></defs><path d="M36 0l36 20v41L36 82 0 61V20z" fill="url(#wg)"/><path d="M36 17l21 12v24L36 65 15 53V29z" fill="#000"/><path d="M18 11c20 0 30 6 36 10M54 21c-2-10 0-12 6-14M57 35c6 10 12 14 15 20M54 53c-8 8-14 12-28 13M36 65c-12 4-20 0-26-6M15 50C8 40 4 36 4 28M15 32c4-12 14-18 28-16" fill="none" stroke="#000" stroke-width="1"/><path d="M36 21l17 10-17 10-17-10z" fill="#3a7599"/><path d="M19 32l16 10v19L19 51z" fill="#206c97"/><path d="M53 32L37 42v19l16-10z" fill="#0b5a8c"/></svg>
      <div class="wmtext"><div class="wmbig">3D世界网</div><div class="wmsmall">WWW.3DSJW.COM</div></div>
    </div>
  </main>

  <div class="slider"><i class="slider-fill"></i><i class="slider-bulb"></i></div>
</div>
</body>
</html>
```
FILE: styles.css
```css
*{box-sizing:border-box}
html,body{margin:0;padding:0;height:100%;overflow:hidden;background:#fff}
body{font:12px/1.2 "Noto Sans","Noto Sans CJK SC",sans-serif;color:#333}
i{display:block;font-style:normal}
svg{display:block;flex:none;overflow:visible}
.app{position:relative;width:1210px;height:741px;display:flex;flex-direction:column;overflow:hidden}

.titlebar{height:26px;display:flex;align-items:center;background:#fff;flex:none}
.nxlogo{font:bold 24px/28px "Liberation Sans",sans-serif;color:#8fa3ad;width:39px;padding-left:2px;flex:none}
.titlediv{width:1px;height:20px;background:#d6d6d6}
.titletext{margin-left:4px;font-size:12.700px;color:#222;white-space:nowrap}

.menubar{height:27px;flex:none;background:#c8d6d4;display:flex;align-items:center;padding-left:2px;white-space:nowrap;font-size:11.500px}
.menuicon{width:15px;height:15px;margin:0 6px 0 2px}
.m{margin-right:13px;color:#333}
.m-wide{margin-right:19px}
.grip{width:3px;height:20px;margin-right:0;background:repeating-linear-gradient(to bottom,#aaa 0 1px,transparent 1px 3px)}
.g8{width:8px;background:repeating-linear-gradient(to bottom,#aaa 0 1px,transparent 1px 3px) center/2px 100% no-repeat;height:28px;flex:none}

.tb{height:33px;flex:none;display:flex;align-items:center;background:#fff;border-bottom:2px solid #e6e6e6;white-space:nowrap}
.tb-text{height:27px;padding:1px 0 0 2px;font-size:11px}
.tb-text .grip{margin-right:4px}
.tb-last{border-bottom:0;padding-top:2px;font-size:11px}
.ti{display:flex;align-items:center;margin-right:9px}
.ti::after{content:"";margin-left:3px;width:0;height:0;border:3px solid transparent;border-top:4px solid #222;border-bottom:0}
.ti-tight{margin-right:6px}
.caret{width:0;height:0;border:3.500px solid transparent;border-top:4px solid #222;border-bottom:0;flex:none}
.caret-light{border-top-color:#aaa;border-width:5px 4px 0}
.sep{width:1px;height:26px;background:#dcdcdc;flex:none}
.sep-t{margin:0 9px 0 -4px;height:22px}
.s1{margin:0 0 0 1px}
.s2{margin:0 2px}
.s3{margin:0 3px}
.s5{margin:0 0 0 5px}
.s2m3{margin:0 3px 0 2px}
.s2m0{margin:0 0 0 2px}
.s3m0{margin:0 0 0 3px}
.ml2{margin-left:2px}
.ml4{margin-left:3px}

.c{display:flex;align-items:center;justify-content:center;height:26px;flex:none}
.c9{width:9px}.c10{width:10px}.c12{width:12px}.c14{width:14px}.c18{width:18px}.c20{width:20px}.c21{width:21px}
.c23{width:23px}.c24{width:24px}.c25{width:25px}.c26{width:26px}.c28{width:28px}.c29{width:29px}.c30{width:30px}.c31{width:31px}.c33{width:33px}
.s24{width:24px;height:24px}.s20{width:20px;height:20px}.s18{width:18px;height:18px}.s16{width:16px;height:16px}.s15{width:15px;height:15px}.s14{width:14px;height:14px}.s10{width:12px;height:10px}
.tlabel{margin-left:3px;width:24px;color:#222;font-size:11px}
.axl{font:bold 6px "Liberation Sans",sans-serif;fill:#333}
.xyz{font:bold 5.500px "Liberation Sans",sans-serif;fill:#444}
.rx{font:bold 6px "Liberation Sans",sans-serif;fill:#c0504d}
.abs{font:bold 6px "Liberation Sans",sans-serif;fill:#fff}
.nm{font:bold 6.500px "Liberation Sans",sans-serif;fill:#f4e070}
.bigA{font:bold 24px "Liberation Sans",sans-serif;fill:#40f0f0;text-anchor:middle}

.search{margin-left:7px;width:125px;height:20px;border:1px solid #aaa;display:flex;align-items:center;justify-content:space-between;padding:0 2px 0 2px;font-size:11px;color:#222;flex:none}
.caretcell{margin-left:3px}

.slotg{width:8px;flex:none}
.layersel{margin-left:6px;width:49px;height:20px;border:1px solid #aaa;display:flex;align-items:center;justify-content:space-between;padding:0 5px 0 3px;flex:none;margin-right:3px;font-size:12px}
.layersel b{font-weight:600;color:#222}
.bb{width:24px;height:24px;border-radius:6px;overflow:hidden;background:#5a9fd1;display:block}
.gs{width:24px;height:24px;background:#bdbdbd;display:block}

.filter{height:20px;border:1px solid #bbb;color:#bbb;display:flex;align-items:center;justify-content:space-between;padding:0 5px 0 2px;flex:none;font-size:11px}
.f1{margin-left:3px;width:132px}
.f2{margin-left:8px;width:140px}

.main{position:relative;flex:1;min-height:0;display:flex;background:#000;overflow:hidden;isolation:isolate}
.leftbar{width:32px;flex:none;background:#fff;display:flex;flex-direction:column;align-items:center;border-right:1px solid #d0d0d0;overflow:hidden}
.hgrip{width:26px;height:1px;margin:4px 0 2px;flex:none;background:repeating-linear-gradient(to right,#aaa 0 1px,transparent 1px 3px)}
.lc{height:31px;width:31px;flex:none;display:flex;align-items:center;justify-content:center}
.lc svg{width:23px;height:23px}
.ldiv{width:26px;height:1px;background:#ccc;margin:3px 0 1px;flex:none}
.canvas{flex:1;background:#000}

.nav{width:135px;flex:none;background:#fff;overflow:hidden;display:flex;flex-direction:column}
.navhead{height:28px;flex:none;display:flex;align-items:center;padding:2px 0 0 12px;color:#333}
.navbox{width:11px;height:10px;border:1px solid #000;margin-right:12px;box-shadow:inset 0 0 0 .5px #000}
.tree{position:relative;margin-left:9px;border-left:1px solid #d0d0d0;flex:1;min-height:0;width:126px}
.treehead{height:22px;display:flex;align-items:center;padding:2px 0 0 7px;background:#f5f5f5;border-bottom:1px solid #e0e0e0;border-top:1px solid #e0e0e0;color:#333}
.uptri{width:0;height:0;margin-left:18px;border:4px solid transparent;border-bottom:5px solid #222;border-top:0}
.row{height:20px;display:flex;align-items:center;border-bottom:1px solid #eaeaea;white-space:nowrap;color:#333;padding-top:1px}
.row>*{flex:none}
.row span{padding-top:3px}
.alt{background:#f9f9f9}
.r-a{padding-left:20px;gap:4px}
.r-c{padding-left:22px}
.chk{width:12px;height:12px}
.cam{width:14px;height:14px;margin:0 4px 0 3px}
.r-e{padding-left:41px;gap:3px}
.cbx{width:12px;height:12px;border:1px solid #222;background:#fff}
.muted{color:#aaa;font-weight:700;margin-left:1px}
.treelines{position:absolute;left:0;top:22px;width:50px;height:100px}

.dlg-bg{position:absolute;left:48px;top:0;width:328px;height:344px;background:#e6e6e6;display:flex;flex-direction:column;border-top:1px solid #999}
.dlg-title{height:24px;flex:none;background:#5c8882;color:#fff;display:flex;align-items:center;padding:0 8px;font-size:13px}
.dlg-title span{margin-left:10px;color:#dfe9e7}
.dlg-x{margin-left:auto}
.dlg-body{padding:0 10px;flex:1;display:flex;flex-direction:column}
.sect{height:26px;flex:none;display:flex;align-items:center;justify-content:center;color:#333;padding-top:2px}
.sect-first{height:31px;padding-top:7px}
.radios{height:30px;width:119px;flex:none;background:#fff;box-shadow:0 1px 1px #ccc;display:flex;align-items:center;padding-left:5px}
.radios span{margin:0 14px 0 6px}
.radios span:last-child{margin-right:0}
.radio{width:12px;height:12px;border-radius:50%;border:1px solid #999;background:radial-gradient(circle at 50% 40%,#f4f4f4,#ccc);flex:none}
.radio.on{background:radial-gradient(circle,#0d6fae 0 3px,#e8e8e8 3.500px)}
.crow{height:20px;margin-top:2px;display:flex;justify-content:space-between;align-items:center;flex:none;color:#333}
.crow-first{margin-top:4px}
.blk{width:40px;height:20px;background:#000;border:1px solid #777}
.hr{margin:2px 0 0;height:1px;width:100%;border:0;background:#d2d2d2;flex:none}
.defbtn{margin-top:3px;height:29px;flex:none;border:1px solid #aaa;display:flex;align-items:center;justify-content:center;padding-top:1px}
.btnrow{margin-top:11px;display:flex;justify-content:flex-end;gap:5px;padding-right:6px}
.dbtn{width:54px;height:25px;background:#c8c8cc;border:1px solid #aaa;display:flex;align-items:center;justify-content:center}
.primary{background:#9ccce8;border-color:#5ca8d8}

.win{position:absolute;left:417px;top:117px;width:488px;height:314px;border:1px solid #bbb;border-radius:6px;padding:0 5px 6px;background:linear-gradient(#0c0c0c,#0c0c0c) 0 97px/100% 100% no-repeat,linear-gradient(90deg,#9a9a9a,#222 32%,#060606 60%,#3a3a3a 85%,#888);display:flex;flex-direction:column}
.win-title{height:27px;flex:none;position:relative;display:flex;align-items:flex-end;padding:0 0 6px 1px}
.win-close{position:absolute;right:0;top:-1px;width:47px;height:19px;border-radius:0 0 4px 4px;border:1px solid #d8a0a0;border-top:0;background:linear-gradient(#c0605a,#a02a20 55%,#b84a40);display:flex;align-items:center;justify-content:center}
.client{flex:1;min-height:0;background:#f0f0f0;border:1px solid #555;display:flex}
.cl-left{width:228px;flex:none;padding:6px 0 0 5px}
.lab{height:12px;line-height:12px;font-size:12px;color:#222;white-space:nowrap}
.lab2{margin-top:21px}
.swgrid{display:grid;grid-template-columns:repeat(8,18px);grid-auto-rows:14px;gap:6px 8px;margin:6px 0 0 5px}
.sw{background:#fff;border:1px solid;border-color:#808080 #fff #fff #808080;box-shadow:0 0 0 1px #c8c8c8;position:relative}
.sel{box-shadow:0 0 0 1px #000,0 0 0 2px #f0f0f0}
.sel::after{content:"";position:absolute;inset:-4px;border:1px dotted #000}
.wbtn{background:#f0f0f0;border:1px solid;border-color:#fff #777 #777 #fff;display:flex;align-items:center;justify-content:center;white-space:nowrap}
.wbtn-define{margin:14px 0 0 1px;width:201px;height:20px;color:#aaa;box-shadow:1px 1px 0 #aaa}
.wbtnrow{display:flex;gap:2px;margin:4px 0 0 1px}
.wbtn-ok{width:66px;height:21px;border-color:#333;box-shadow:inset -1px -1px 0 #888}
.wbtn-c{width:66px;height:21px}
.cl-right{flex:1;padding-top:6px;display:flex;flex-direction:column}
.pick{position:relative;display:flex;gap:16px;height:173px}
.spectrum{width:199px;background:linear-gradient(to bottom,rgba(128,128,128,0),#808080),linear-gradient(to right,#f00,#ff0 17%,#0f0 33%,#0ff 50%,#00f 67%,#f0f 83%,#f00);border:1px solid #fff}
.lum{width:24px;background:linear-gradient(#fff,#000);border:1px solid #d8d8d8}
.lumarrow{position:absolute;left:240px;bottom:-2px;width:0;height:0;border:5px solid transparent;border-right:6px solid #000;border-left:0}
.cross{position:absolute;left:124px;bottom:1px;width:15px;height:9px;background:linear-gradient(#000,#000) 50% 0/3px 4px no-repeat,linear-gradient(#000,#000) 0 100%/5px 2px no-repeat,linear-gradient(#000,#000) 100% 100%/5px 2px no-repeat}
.lower{display:flex;margin-top:7px;height:60px}
.prev{width:76px;flex:none;white-space:nowrap;font-size:12px;color:#222}
.prevbox{width:59px;height:38px;background:#000;margin-bottom:4px}
.fields{margin-left:auto;margin-right:10px;display:grid;grid-template-columns:70px 26px 44px 25px;grid-auto-rows:16px;row-gap:5px;align-items:center;white-space:nowrap;color:#222}
.fields label{justify-self:end;margin-right:6px}
.fields .l2{justify-self:start;margin:0 0 0 4px}
.inp{background:#fff;height:16px;border:1px solid #d0d0d0;border-top-color:#888;border-left-color:#888;padding-left:2px;line-height:14px}
.wbtn-add{margin-top:3px;width:240px;height:21px}

.caption{position:absolute;left:611px;top:443px;color:#e8241c;font-size:17px;line-height:22px;letter-spacing:2px;white-space:nowrap}
.arrows{position:absolute;left:0;top:0;width:1210px;height:562px;pointer-events:none}

.wm{position:absolute;left:927px;top:467px;display:flex;mix-blend-mode:lighten;pointer-events:none}
.wmlogo{width:72px;height:82px}
.wmtext{margin-left:8px;padding-top:10px;white-space:nowrap}
.wmbig{font:bold 46px/46px "Liberation Sans","Noto Sans CJK SC",sans-serif;color:#7f7f7f}
.wmsmall{margin-top:2px;font:14px/14px "Liberation Sans",sans-serif;letter-spacing:3.500px;color:#6a6a6a}

.slider{position:absolute;left:1px;top:104px;width:6px;height:53px;background:#555;border-radius:3px}
.slider-fill{position:absolute;left:0;right:0;top:24px;bottom:0;background:#39a0cc}
.slider-bulb{position:absolute;left:-2px;bottom:-1px;width:10px;height:10px;border-radius:50%;background:#39a0cc}
```
